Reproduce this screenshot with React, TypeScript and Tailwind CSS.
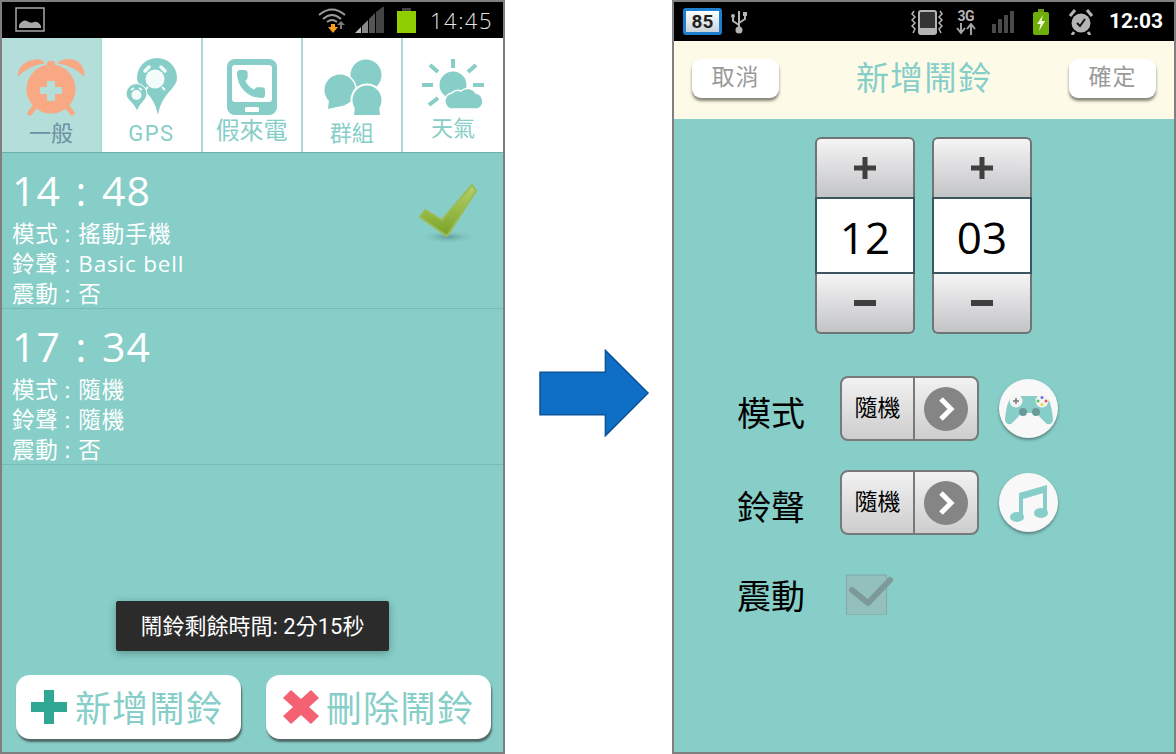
import React from 'react';
import { Phone } from 'lucide-react';

const cjk = "font-['Roboto','Noto_Sans_CJK_TC',sans-serif]";
const droid = "font-['Open_Sans','Noto_Sans_CJK_TC',sans-serif]";

const AlarmTab = () => (
  <svg width="100" height="64" viewBox="0 0 100 64">
    <path d="M17 20 Q18 6 34 4 Q40 3 43 7 Q28 9 17 20Z M57 7 Q64 2 72 4 Q83 7 83 20 Q72 9 57 7Z" fill="#f9a884" stroke="#f9a884" strokeWidth="1" strokeLinejoin="round" />
    <rect x="46" y="5" width="8" height="6" rx="2" fill="#f9a884" />
    <path d="M35 49 L29 57 M65 49 L71 57" stroke="#f9a884" strokeWidth="5" strokeLinecap="round" />
    <circle cx="50" cy="33" r="24.500" fill="#f9a884" />
    <path d="M46 25 h8 v6 h7 v7 h-7 v7 h-8 v-7 h-7 v-7 h7Z" fill="#b3deda" />
  </svg>
);

const GpsTab = () => (
  <svg width="100" height="64" viewBox="0 0 100 64">
    <path d="M36 22 A20 20 0 1 1 76 22 C76 33 61 36 57 59 C53 36 36 33 36 22Z" fill="#87cec8" />
    <circle cx="54" cy="23" r="9.500" fill="#f4fbfb" />
    <path d="M44 15 l4 -4 M64 15 l-4 -4" stroke="#f4fbfb" strokeWidth="3.500" strokeLinecap="round" />
    <path d="M47 31 l-3 3 M61 31 l3 3" stroke="#f4fbfb" strokeWidth="2" />
    <path d="M25 38 A10.500 10.500 0 1 1 46 38 C46 44 39 46 36 56 C33 46 25 44 25 38Z" fill="#87cec8" stroke="#fff" strokeWidth="1" />
    <circle cx="35.500" cy="39" r="5" fill="#f4fbfb" />
    <path d="M30 34 l3 -2 M41 34 l-3 -2" stroke="#f4fbfb" strokeWidth="2" />
  </svg>
);

const PhoneTab = () => (
  <svg width="100" height="64" viewBox="0 0 100 64">
    <rect x="25" y="3" width="50" height="56" rx="8" fill="#87cec8" />
    <rect x="30" y="9" width="40" height="37" rx="3" fill="#fff" />
    <rect x="43" y="51" width="14" height="5" rx="1" fill="#fff" />
    <Phone x={33} y={12} width={32} height={32} fill="#87cec8" stroke="#87cec8" strokeWidth={1} />
  </svg>
);

const GroupTab = () => (
  <svg width="100" height="64" viewBox="0 0 100 64">
    <circle cx="64" cy="19" r="15.500" fill="#87cec8" />
    <path d="M60 33 l10 0 l2 6 z" fill="#87cec8" />
    <circle cx="38" cy="34" r="17" fill="#fff" />
    <circle cx="38" cy="34" r="15.500" fill="#87cec8" />
    <path d="M27 44 L26 53 L44 49Z" fill="#87cec8" />
    <circle cx="65" cy="44" r="16.500" fill="#fff" />
    <circle cx="65" cy="44" r="14.500" fill="#87cec8" />
    <path d="M53 50 L52 59 L78 59 L77 50Z" fill="#87cec8" />
  </svg>
);

const WeatherTab = () => (
  <svg width="100" height="64" viewBox="0 0 100 64">
    <path d="M50 3 V12 M27 9 L35 16 M73 9 L65 16 M19 29 H30 M70 29 H81 M26 49 L35 42" stroke="#87cec8" strokeWidth="4" />
    <circle cx="50" cy="29" r="13.500" fill="#87cec8" />
    <path d="M43 49 A8 8 0 0 1 49 37 A8 8 0 0 1 58 35 A10 10 0 0 1 73 37 A8.500 8.500 0 0 1 75 53 L50 53 A7 7 0 0 1 43 49Z" fill="#87cec8" stroke="#fff" strokeWidth="1.500" />
  </svg>
);

const tabs = [
  { label: '一般', icon: <AlarmTab />, text: 'text-[#6a90a2] mt-[1px]', bg: 'bg-[#b3deda]' },
  { label: 'GPS', icon: <GpsTab />, text: 'text-[#87cec8] mt-[1px] tracking-[1.5px]', bg: 'bg-white' },
  { label: '假來電', icon: <PhoneTab />, text: 'text-[#87cec8] -mt-[2px] text-[24px]', bg: 'bg-white' },
  { label: '群組', icon: <GroupTab />, text: 'text-[#87cec8] mt-[1px]', bg: 'bg-white' },
  { label: '天氣', icon: <WeatherTab />, text: 'text-[#87cec8] -mt-[4px]', bg: 'bg-white' },
];

const alarms = [
  { time: '14 : 48', mode: '搖動手機', ring: 'Basic bell', on: true },
  { time: '17 : 34', mode: '隨機', ring: '隨機', on: false },
];

const CheckMark = () => (
  <svg width="65" height="66" viewBox="0 0 65 66" className="mt-[26px]">
    <defs>
      <linearGradient id="chk" x1="0" y1="0" x2="0" y2="1">
        <stop offset="0" stopColor="#b5d268" />
        <stop offset="1" stopColor="#78a228" />
      </linearGradient>
      <radialGradient id="shd">
        <stop offset="0" stopColor="#5f9c97" />
        <stop offset="1" stopColor="#87cec8" stopOpacity="0" />
      </radialGradient>
    </defs>
    <ellipse cx="33" cy="58" rx="29" ry="7" fill="url(#shd)" />
    <path d="M57 6 L61 12 L32 57 L5 38 L10 31 L27 41Z" fill="url(#chk)" stroke="#9dbb55" strokeWidth="2" strokeLinejoin="round" />
  </svg>
);

const Row = ({ label, value }: { label: string; value: string }) => (
  <div className="flex tracking-[0.8px]">
    <span>{label}</span>
    <span className="ml-[6px]">:</span>
    <span className="ml-[7px]">{value}</span>
  </div>
);

const LeftStatus = () => (
  <div className="flex h-[36px] items-center bg-black">
    <svg width="30" height="26" viewBox="0 0 30 26" className="ml-[13px]">
      <rect x="1" y="1" width="28" height="23" fill="none" stroke="#a8a8a8" strokeWidth="1.500" />
      <path d="M4 21 V18 Q8 12 12 14 Q16 17 19 15 Q23 14 26 19 V21Z" fill="#a8a8a8" />
    </svg>
    <svg width="30" height="26" viewBox="0 0 30 26" className="ml-auto">
      <path d="M2 8 Q15 -3 28 8" fill="none" stroke="#9a9a9a" strokeWidth="2" />
      <path d="M6 12 Q15 4 24 12" fill="none" stroke="#9a9a9a" strokeWidth="2" />
      <path d="M10 15 Q15 11 20 15" fill="none" stroke="#9a9a9a" strokeWidth="2" />
      <path d="M14 17 h4 v3 h3 l-5 6 l-5 -6 h3z" fill="#f5a11e" />
      <path d="M23 22 v-4 h-3 l4 -4 l4 4 h-3 v4z" fill="#7a7a7a" />
    </svg>
    <svg width="30" height="27" viewBox="0 0 30 27" className="ml-[8px]">
      <path d="M0 26 L6 20 V26Z" fill="#bbb" />
      <path d="M7 19 L13 13 V26 H7Z" fill="#888" />
      <path d="M14 12 L20 6 V26 H14Z" fill="#555" />
      <path d="M21 5 L29 -1 V26 H21Z" fill="#444" />
    </svg>
    <div className="ml-[12px] flex flex-col items-center">
      <div className="h-[3px] w-[9px] bg-[#444]" />
      <div className="h-[22px] w-[19px] bg-[#8fce00]" />
    </div>
    <span className={`ml-[14px] mr-[10px] text-[22px] font-light leading-none tracking-[1.5px] text-[#e4e4e4] ${droid}`}>14:45</span>
  </div>
);

const LeftPhone = () => (
  <div className={`flex h-[754px] w-[505px] shrink-0 flex-col border-2 border-[#7f7f7f] ${cjk}`}>
    <LeftStatus />
    <div className="flex h-[115px] border-b border-[#6fb0aa]">
      {tabs.map((t) => (
        <div key={t.label} className={`flex w-[100px] flex-1 flex-col items-center border-r-2 border-[#a9dcd8] pt-[18px] last:border-r-0 ${t.bg}`}>
          {t.icon}
          <span className={`text-[22px] leading-[26px] ${t.text}`}>{t.label}</span>
        </div>
      ))}
    </div>
    <div className="relative flex flex-1 flex-col bg-[#87cec8]">
      {alarms.map((a) => (
        <div key={a.time} className={`flex h-[156px] justify-between border-b border-[#75bcb6] pl-[10px] pr-[23px] text-white ${droid}`}>
          <div>
            <div className="mt-[12px] text-[41px] leading-[50px] tracking-[1px] [word-spacing:3px]">{a.time}</div>
            <div className="mt-[4px] text-[22.500px] leading-[30px]">
              <Row label="模式" value={a.mode} />
              <Row label="鈴聲" value={a.ring} />
              <Row label="震動" value="否" />
            </div>
          </div>
          {a.on && <CheckMark />}
        </div>
      ))}
      <div className="absolute left-[114px] top-[448px] flex h-[50px] w-[273px] items-center justify-center rounded-[2px] bg-[#2b2b2b] text-[22px] text-white shadow-[0_2px_8px_rgba(0,0,0,0.3)]">
        鬧鈴剩餘時間: 2分15秒
      </div>
      <div className="mt-auto flex gap-[25px] pb-[13px] pl-[14px]">
        <div className="flex h-[64px] w-[225px] items-center gap-[8px] rounded-[14px] bg-white pl-[15px] shadow-[1px_3px_2px_rgba(60,70,70,0.75)]">
          <svg width="36" height="34" viewBox="0 0 36 34">
            <path d="M13 0 h10 v12 h13 v10 h-13 v12 h-10 v-12 h-13 v-10 h13z" fill="#2fa792" />
          </svg>
          <span className="pt-[5px] text-[36px] leading-none tracking-[1px] text-[#87cec8]">新增鬧鈴</span>
        </div>
        <div className="flex h-[64px] w-[225px] items-center gap-[7px] rounded-[14px] bg-white pl-[17px] shadow-[1px_3px_2px_rgba(60,70,70,0.75)]">
          <svg width="36" height="34" viewBox="0 0 36 34">
            <path d="M8 0 L18 9 L28 0 L36 8 L26 17 L36 26 L28 34 L18 25 L8 34 L0 26 L10 17 L0 8Z" fill="#f46173" />
          </svg>
          <span className="pt-[5px] text-[36px] leading-none tracking-[1px] text-[#87cec8]">刪除鬧鈴</span>
        </div>
      </div>
    </div>
  </div>
);

const Stepper = ({ value }: { value: string }) => (
  <div className="flex w-[100px] flex-col">
    <div className="flex h-[60px] items-center justify-center rounded-t-[6px] border-2 border-b-0 border-[#6f7477] bg-gradient-to-b from-[#f5f5f6] to-[#c3c4c6]">
      <svg width="22" height="22" viewBox="0 0 22 22"><path d="M8.500 0 h5 v8.500 h8.500 v5 h-8.500 v8.500 h-5 v-8.500 h-8.500 v-5 h8.500z" fill="#3f3f3f" /></svg>
    </div>
    <div className={`flex h-[77px] items-center justify-center border-2 border-[#3d5560] bg-white pt-[2px] text-[44px] leading-none text-black ${droid}`}>{value}</div>
    <div className="flex h-[60px] items-center justify-center rounded-b-[6px] border-2 border-t-0 border-[#6f7477] bg-gradient-to-b from-[#f5f5f6] to-[#c3c4c6]">
      <svg width="22" height="6" viewBox="0 0 22 6"><rect width="22" height="6" fill="#3f3f3f" /></svg>
    </div>
  </div>
);

const Selector = () => (
  <div className="flex h-[65px] w-[139px] rounded-[8px] border-2 border-[#77797a] bg-gradient-to-b from-[#f2f2f2] to-[#cdcdcd] text-black">
    <div className="flex w-[73px] items-center justify-center border-r-2 border-[#77797a] pt-[2px] text-[23px]">隨機</div>
    <div className="flex flex-1 items-center justify-center">
      <svg width="44" height="44" viewBox="0 0 44 44">
        <circle cx="22" cy="22" r="22" fill="#858585" />
        <path d="M17 12 L27 22 L17 32" fill="none" stroke="#fff" strokeWidth="5" />
      </svg>
    </div>
  </div>
);

const IconCircle = ({ children }: { children: React.ReactNode }) => (
  <div className="ml-[20px] flex h-[59px] w-[59px] items-center justify-center rounded-full bg-[#f8f8f8] shadow-[0_2px_3px_rgba(60,80,80,0.6)]">
    {children}
  </div>
);

const Gamepad = () => (
  <svg width="50" height="36" viewBox="0 0 50 36">
    <path d="M10 5 H40 Q47 6 49 28 Q49 34 43 33 Q36 27 33 22 H17 Q14 27 7 33 Q1 34 1 28 Q3 6 10 5Z" fill="#87cec8" />
    <circle cx="12" cy="10" r="6.500" fill="#f4f4f4" />
    <path d="M9 10 h6 M12 7 v6" stroke="#777" strokeWidth="1.500" />
    <circle cx="38" cy="10" r="6.500" fill="#f4f4f4" />
    <circle cx="38" cy="6.500" r="1.500" fill="#6f6fd0" />
    <circle cx="42" cy="10" r="1.500" fill="#e85a5a" />
    <circle cx="38" cy="13.500" r="1.500" fill="#e6d23c" />
    <circle cx="34" cy="10" r="1.500" fill="#5cc05c" />
    <circle cx="19" cy="21" r="4" fill="#6a9a98" />
    <circle cx="32" cy="21" r="4" fill="#6a9a98" />
  </svg>
);

const Note = () => (
  <svg width="38" height="38" viewBox="0 0 38 38">
    <path d="M9 9 L37 1 V8 L13 15 V33 H9Z M33 6 H37 V29 H33Z" fill="#87cec8" />
    <ellipse cx="7" cy="33" rx="7" ry="5" fill="#87cec8" />
    <ellipse cx="31" cy="29" rx="7" ry="5" fill="#87cec8" />
  </svg>
);

const RightStatus = () => (
  <div className="flex h-[39px] items-center bg-black">
    <div className="ml-[9px] flex h-[27px] w-[39px] items-center justify-center rounded-[3px] border-[3px] border-[#1c7fd0] bg-gradient-to-b from-[#ffffff] to-[#c9d3da] text-[19px] font-bold leading-none text-[#222]">85</div>
    <svg width="18" height="26" viewBox="0 0 18 26" className="ml-[8px]">
      <path d="M9 2 V20 M3 8 V12 L9 16 M15 6 V10 L9 14" fill="none" stroke="#b4b4b4" strokeWidth="2" />
      <circle cx="9" cy="21" r="3.500" fill="#b4b4b4" />
      <circle cx="3" cy="7" r="2" fill="#b4b4b4" />
      <rect x="13" y="3" width="4" height="4" fill="#b4b4b4" />
    </svg>
    <svg width="32" height="26" viewBox="0 0 32 26" className="ml-auto">
      <rect x="8" y="2" width="17" height="23" rx="2" fill="#333" stroke="#b4b4b4" strokeWidth="2" />
      <rect x="9" y="19" width="15" height="6" fill="#b4b4b4" />
      <path d="M3 2 L1 5 L4 8 L1 11 L4 14 L1 17 L4 20 L2 24 M29 2 L31 5 L28 8 L31 11 L28 14 L31 17 L28 20 L30 24" fill="none" stroke="#b4b4b4" strokeWidth="1.500" />
    </svg>
    <div className="ml-[11px] flex w-[24px] flex-col items-center">
      <span className="text-[14px] font-bold leading-[14px] tracking-[-0.5px] text-[#b4b4b4]">3G</span>
      <svg width="22" height="12" viewBox="0 0 20 12">
        <path d="M5 0 V8 M1 5 L5 10 L9 5 M15 12 V3 M11 6 L15 1 L19 6" fill="none" stroke="#a4a4a4" strokeWidth="2" />
      </svg>
    </div>
    <div className="ml-[14px] flex items-end gap-[2px]">
      <div className="h-[9px] w-[4px] bg-[#4a4a4a]" />
      <div className="h-[14px] w-[4px] bg-[#4a4a4a]" />
      <div className="h-[18px] w-[4px] bg-[#4a4a4a]" />
      <div className="h-[22px] w-[4px] bg-[#4a4a4a]" />
    </div>
    <svg width="18" height="26" viewBox="0 0 18 26" className="ml-[18px]">
      <rect x="6" y="0" width="6" height="3" fill="#6a9a10" />
      <rect x="1" y="3" width="16" height="23" rx="2" fill="#6fae0a" />
      <path d="M11 6 L5 15 H8.500 L7 22 L13 12 H9.500Z" fill="#eef8d0" />
    </svg>
    <svg width="24" height="26" viewBox="0 0 24 26" className="ml-[19px]">
      <circle cx="12" cy="14" r="9.500" fill="#b4b4b4" />
      <path d="M1 7 L6 1 M23 7 L18 1 M5 23 L3 26 M19 23 L21 26" stroke="#b4b4b4" strokeWidth="3" />
      <path d="M8 14 L11 17 L16 10" fill="none" stroke="#111" strokeWidth="2" />
    </svg>
    <span className="ml-[16px] mr-[11px] font-['Roboto',sans-serif] text-[21px] font-bold leading-none text-white">12:03</span>
  </div>
);

const HeadButton = ({ label }: { label: string }) => (
  <div className="flex h-[39px] w-[87px] items-center justify-center rounded-[9px] bg-white text-[23px] tracking-[1px] text-[#9a9a9a] shadow-[0_3px_3px_rgba(70,70,60,0.65)]">
    {label}
  </div>
);

const RightPhone = () => (
  <div className={`flex h-[754px] w-[504px] shrink-0 flex-col border-2 border-[#7f7f7f] ${cjk}`}>
    <RightStatus />
    <div className="flex h-[78px] items-center justify-between bg-[#fdfbe8] px-[18px] pb-[3px]">
      <HeadButton label="取消" />
      <span className="text-[33px] tracking-[1px] text-[#87cec8]">新增鬧鈴</span>
      <HeadButton label="確定" />
    </div>
    <div className="flex flex-1 flex-col bg-[#87cec8]">
      <div className="flex gap-[17px] pl-[141px] pt-[18px]">
        <Stepper value="12" />
        <Stepper value="03" />
      </div>
      <div className="mt-[42px] flex items-center pl-[63px]">
        <span className="mt-[10px] w-[103px] text-[34px] leading-none text-black">模式</span>
        <Selector />
        <IconCircle><Gamepad /></IconCircle>
      </div>
      <div className="mt-[29px] flex items-center pl-[63px]">
        <span className="mt-[10px] w-[103px] text-[34px] leading-none text-black">鈴聲</span>
        <Selector />
        <IconCircle><Note /></IconCircle>
      </div>
      <div className="mt-[38px] flex items-center pl-[63px]">
        <span className="mt-[6px] w-[109px] text-[34px] leading-none text-black">震動</span>
        <svg width="48" height="42" viewBox="0 0 48 42">
          <rect x="0.500" y="2" width="40" height="40" fill="#93bfbc" stroke="#7fa8a6" />
          <path d="M6 17 L22 30 L44 7" fill="none" stroke="#7d9a99" strokeWidth="6" strokeLinecap="round" strokeLinejoin="round" />
        </svg>
      </div>
    </div>
  </div>
);

export default function App() {
  return (
    <div className="flex h-[754px] w-[1176px] overflow-hidden bg-white">
      <LeftPhone />
      <div className="ml-[34px] flex w-[111px] shrink-0 items-start pt-[349px]">
        <svg width="112" height="90" viewBox="0 0 112 90">
          <path d="M1 23 H67 V1 L110 44 L67 87 V66 H1Z" fill="#0f6fc6" stroke="#0b5394" strokeWidth="1.500" />
        </svg>
      </div>
      <div className="ml-[22px]">
        <RightPhone />
      </div>
    </div>
  );
}
